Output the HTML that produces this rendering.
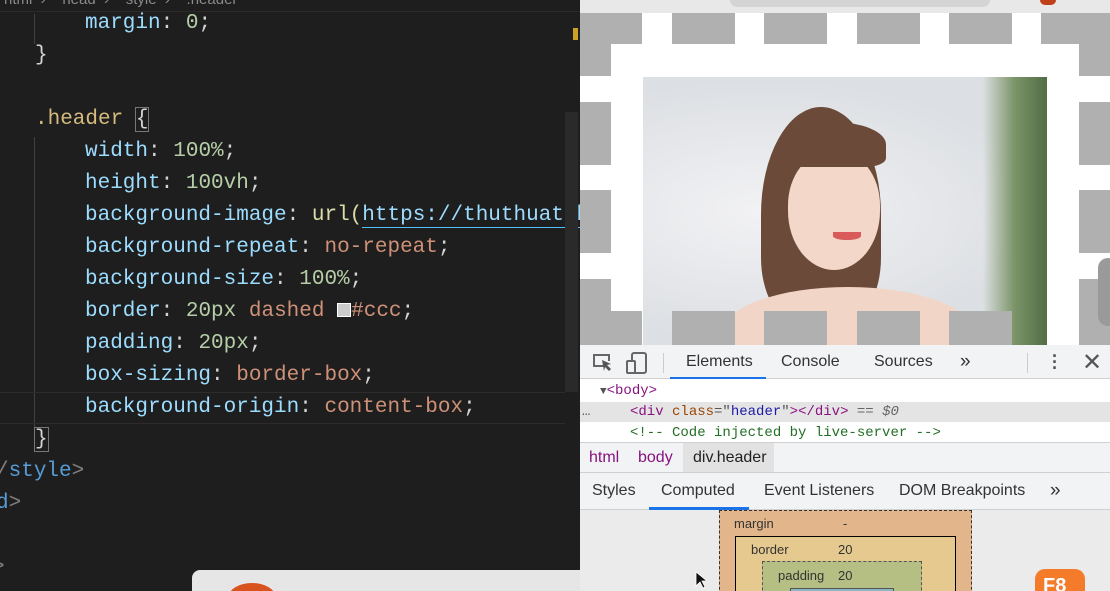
<!DOCTYPE html>
<html><head><meta charset="utf-8"><style>
*{margin:0;padding:0;box-sizing:border-box}
html,body{width:1110px;height:591px;overflow:hidden}
body{position:relative;background:#1e1e1e;font-family:"Liberation Sans",sans-serif}
.ed{position:absolute;left:0;top:0;width:580px;height:591px;background:#1e1e1e;font-family:"Liberation Mono",monospace;font-size:21px;color:#9cdcfe;overflow:hidden}
.ln{position:absolute;white-space:pre;line-height:32px;height:32px}
.p{color:#9cdcfe}.n{color:#b5cea8}.s{color:#ce9178}.w{color:#d4d4d4}.c{color:#d7ba7d}.t{color:#569cd6}.g{color:#808080}
.ab{position:absolute}
.dt{font-family:"Liberation Sans",sans-serif;font-size:16px;color:#333}
.mono{font-family:"Liberation Mono",monospace;font-size:14px}
</style></head><body>
<div class="ed">
 <div class="ab" style="left:0;top:0;width:580px;height:12px;background:#1e1e1e;border-bottom:1px solid #2a2a2a;overflow:hidden"><div style="position:absolute;top:-9px;left:4px;font-family:'Liberation Sans';font-size:15px;color:#8a8a8a;white-space:pre">html  ›    head  ›    style  ›    .header</div></div>
 <div class="ab" style="left:34px;top:14px;width:1px;height:30px;background:#404040"></div>
 <div class="ab" style="left:34px;top:137px;width:1px;height:290px;background:#404040"></div>
 <div class="ln" style="left:85px;top:8px">margin<span class="w">: </span><span class="n">0</span><span class="w">;</span></div>
 <div class="ln w" style="left:35px;top:40px">}</div>
 <div class="ln" style="left:35px;top:104px"><span class="c">.header</span> <span class="w" style="outline:1px solid #777">{</span></div>
 <div class="ln" style="left:85px;top:136px">width<span class="w">: </span><span class="n">100%</span><span class="w">;</span></div>
 <div class="ln" style="left:85px;top:168px">height<span class="w">: </span><span class="n">100vh</span><span class="w">;</span></div>
 <div class="ln" style="left:85px;top:200px">background-image<span class="w">: </span><span style="color:#dcdcaa">url(</span><span style="border-bottom:1px solid #4fc1ff">https://thuthuatnhanh.com</span></div>
 <div class="ln" style="left:85px;top:232px">background-repeat<span class="w">: </span><span class="s">no-repeat</span><span class="w">;</span></div>
 <div class="ln" style="left:85px;top:264px">background-size<span class="w">: </span><span class="n">100%</span><span class="w">;</span></div>
 <div class="ln" style="left:85px;top:296px">border<span class="w">: </span><span class="n">20px</span> <span class="s">dashed</span> <span style="display:inline-block;width:14px;height:14px;background:#ccc;border:1px solid #fff;vertical-align:-1px"></span><span class="s">#ccc</span><span class="w">;</span></div>
 <div class="ln" style="left:85px;top:328px">padding<span class="w">: </span><span class="n">20px</span><span class="w">;</span></div>
 <div class="ln" style="left:85px;top:360px">box-sizing<span class="w">: </span><span class="s">border-box</span><span class="w">;</span></div>
 <div class="ab" style="left:0;top:392px;width:565px;height:32px;border-top:1px solid #2c2c2c;border-bottom:1px solid #2c2c2c"></div>
 <div class="ln" style="left:85px;top:392px">background-origin<span class="w">: </span><span class="s">content-box</span><span class="w">;</span></div>
 <div class="ln w" style="left:35px;top:424px"><span style="outline:1px solid #777">}</span></div>
 <div class="ln" style="left:-4px;top:456px"><span class="g">/</span><span class="t">style</span><span class="g">&gt;</span></div>
 <div class="ln" style="left:-4px;top:488px"><span class="t">d</span><span class="g">&gt;</span></div>
 <div class="ln g" style="left:-8px;top:552px">&gt;</div>
 <div class="ab" style="left:565px;top:112px;width:13px;height:280px;background:#2a2a2a"></div>
 <div class="ab" style="left:573px;top:28px;width:5px;height:12px;background:#c9a227"></div>
 <div class="ab" style="left:192px;top:570px;width:400px;height:30px;background:#e6e6e6;border-radius:8px 0 0 0"></div>
 <div class="ab" style="left:228px;top:583px;width:48px;height:30px;border-radius:50%;background:#d9531e"></div>
</div>

<!-- browser preview -->
<div class="ab" style="left:580px;top:0;width:530px;height:345px;background:#fff;overflow:hidden">
 <div class="ab" style="left:0;top:0;width:530px;height:13px;background:#e8e8e8"></div>
 <div class="ab" style="left:150px;top:0;width:260px;height:7px;background:#d4d4d4;border-radius:0 0 8px 8px"></div>
 <div class="ab" style="left:460px;top:0;width:16px;height:5px;background:#c0401a;border-radius:0 0 8px 8px"></div>
 <div class="ab" style="left:0;top:13px;width:62px;height:31px;background:#b0b0b0"></div>
 <div class="ab" style="left:92px;top:13px;width:63px;height:31px;background:#b0b0b0"></div>
 <div class="ab" style="left:184px;top:13px;width:63px;height:31px;background:#b0b0b0"></div>
 <div class="ab" style="left:277px;top:13px;width:63px;height:31px;background:#b0b0b0"></div>
 <div class="ab" style="left:369px;top:13px;width:63px;height:31px;background:#b0b0b0"></div>
 <div class="ab" style="left:461px;top:13px;width:69px;height:31px;background:#b0b0b0"></div>
 <div class="ab" style="left:0;top:13px;width:31px;height:63px;background:#b0b0b0"></div>
 <div class="ab" style="left:0;top:102px;width:31px;height:63px;background:#b0b0b0"></div>
 <div class="ab" style="left:0;top:190px;width:31px;height:63px;background:#b0b0b0"></div>
 <div class="ab" style="left:0;top:279px;width:31px;height:66px;background:#b0b0b0"></div>
 <div class="ab" style="left:499px;top:13px;width:31px;height:63px;background:#b0b0b0"></div>
 <div class="ab" style="left:499px;top:102px;width:31px;height:63px;background:#b0b0b0"></div>
 <div class="ab" style="left:499px;top:190px;width:31px;height:63px;background:#b0b0b0"></div>
 <div class="ab" style="left:499px;top:279px;width:31px;height:66px;background:#b0b0b0"></div>
 <div class="ab" style="left:63px;top:77px;width:404px;height:268px;overflow:hidden;background:radial-gradient(ellipse at 30% 50%,#f2f2f4,#dcdfe3 70%)">
  <div class="ab" style="left:340px;top:0;width:70px;height:268px;background:linear-gradient(90deg,rgba(255,255,255,0),#7b9468 45%,#4a6640)"></div>
  <div class="ab" style="left:118px;top:30px;width:120px;height:215px;border-radius:50% 50% 30% 30%;background:#6b4a3a"></div>
  <div class="ab" style="left:145px;top:75px;width:92px;height:118px;border-radius:45% 45% 50% 50%;background:#f3d7c8"></div>
  <div class="ab" style="left:138px;top:45px;width:105px;height:45px;border-radius:50% 50% 20% 20%;background:#6b4a3a"></div>
  <div class="ab" style="left:80px;top:210px;width:250px;height:90px;border-radius:50% 50% 0 0;background:#f1d6c8"></div>
  <div class="ab" style="left:190px;top:155px;width:28px;height:8px;border-radius:0 0 50% 50%;background:#d95a5a"></div>
 </div>
 <div class="ab" style="left:0;top:311px;width:62px;height:34px;background:#b0b0b0"></div>
 <div class="ab" style="left:92px;top:311px;width:63px;height:34px;background:#b0b0b0"></div>
 <div class="ab" style="left:184px;top:311px;width:63px;height:34px;background:#b0b0b0"></div>
 <div class="ab" style="left:277px;top:311px;width:63px;height:34px;background:#b0b0b0"></div>
 <div class="ab" style="left:369px;top:311px;width:63px;height:34px;background:#b0b0b0"></div>
 <div class="ab" style="left:518px;top:258px;width:20px;height:68px;background:#9a9a9a;border-radius:10px"></div>
</div>

<!-- devtools -->
<div class="ab dt" style="left:580px;top:345px;width:530px;height:246px;background:#ebebeb;overflow:hidden">
 <div class="ab" style="left:0;top:0;width:530px;height:34px;background:#f1f3f4;border-bottom:1px solid #d0d0d0"></div>
 <svg class="ab" style="left:12px;top:8px" width="22" height="20" viewBox="0 0 22 20"><path d="M12 13H2V2h15v6" fill="none" stroke="#666" stroke-width="2"/><path d="M10 7l9 4-4 1 4 4-2 2-4-4-1 4z" fill="#555"/></svg>
 <svg class="ab" style="left:46px;top:7px" width="22" height="22" viewBox="0 0 22 22"><rect x="6" y="1" width="14" height="20" rx="2" fill="none" stroke="#666" stroke-width="2"/><rect x="1" y="9" width="8" height="12" rx="1" fill="#f1f3f4" stroke="#666" stroke-width="2"/></svg>
 <div class="ab" style="left:83px;top:8px;width:1px;height:20px;background:#ccc"></div>
 <div class="ab" style="left:106px;top:8px">Elements</div>
 <div class="ab" style="left:90px;top:32px;width:96px;height:2px;background:#1a73e8"></div>
 <div class="ab" style="left:201px;top:8px">Console</div>
 <div class="ab" style="left:294px;top:8px">Sources</div>
 <div class="ab" style="left:380px;top:6px;font-size:19px">»</div>
 <div class="ab" style="left:447px;top:8px;width:1px;height:20px;background:#ccc"></div>
 <div class="ab" style="left:472px;top:8px;font-size:18px;font-weight:bold;line-height:6px;color:#555">·<br>·<br>·</div>
 <div class="ab" style="left:502px;top:3px;font-size:24px;color:#555">✕</div>
 <div class="ab" style="left:0;top:34px;width:530px;height:63px;background:#fff"></div>
 <div class="ab" style="left:0;top:57px;width:530px;height:20px;background:#e4e4e4"></div>
 <div class="ab mono" style="left:20px;top:38px;color:#881280"><span style="color:#555;font-size:11px">▼</span>&lt;body&gt;</div>
 <div class="ab mono" style="left:2px;top:59px;color:#555">…</div>
 <div class="ab mono" style="left:50px;top:59px;color:#881280">&lt;div <span style="color:#994500">class</span><span style="color:#555">="</span><span style="color:#1a1aa6">header</span><span style="color:#555">"</span>&gt;&lt;/div&gt; <span style="color:#666">== <i>$0</i></span></div>
 <div class="ab mono" style="left:50px;top:80px;color:#236e25">&lt;!-- Code injected by live-server --&gt;</div>
 <div class="ab" style="left:0;top:97px;width:530px;height:31px;background:#f1f3f4;border-top:1px solid #d0d0d0;border-bottom:1px solid #d0d0d0"></div>
 <div class="ab" style="left:103px;top:98px;width:91px;height:29px;background:#e2e2e2"></div>
 <div class="ab" style="left:9px;top:104px;color:#881280">html</div>
 <div class="ab" style="left:58px;top:104px;color:#881280">body</div>
 <div class="ab" style="left:113px;top:104px;color:#222">div.header</div>
 <div class="ab" style="left:0;top:128px;width:530px;height:37px;background:#f1f3f4;border-bottom:1px solid #d0d0d0"></div>
 <div class="ab" style="left:12px;top:137px">Styles</div>
 <div class="ab" style="left:81px;top:137px">Computed</div>
 <div class="ab" style="left:69px;top:162px;width:100px;height:3px;background:#1a73e8"></div>
 <div class="ab" style="left:184px;top:137px">Event Listeners</div>
 <div class="ab" style="left:319px;top:137px">DOM Breakpoints</div>
 <div class="ab" style="left:470px;top:135px;font-size:19px">»</div>
 <div class="ab" style="left:139px;top:165px;width:253px;height:90px;background:#e2b68a;border:1px dashed #333"></div>
 <div class="ab" style="left:154px;top:171px;font-size:13px">margin</div>
 <div class="ab" style="left:263px;top:171px;font-size:13px">-</div>
 <div class="ab" style="left:155px;top:191px;width:221px;height:60px;background:#e6c98f;border:1px solid #000"></div>
 <div class="ab" style="left:171px;top:197px;font-size:13px">border</div>
 <div class="ab" style="left:258px;top:197px;font-size:13px">20</div>
 <div class="ab" style="left:182px;top:216px;width:160px;height:40px;background:#b5bf83;border:1px dashed #555"></div>
 <div class="ab" style="left:198px;top:223px;font-size:13px">padding</div>
 <div class="ab" style="left:258px;top:223px;font-size:13px">20</div>
 <div class="ab" style="left:210px;top:243px;width:104px;height:10px;background:#8cb6c0;border:1px solid #555"></div>
 <div class="ab" style="left:455px;top:224px;width:50px;height:30px;background:#f47b2a;border-radius:10px"></div>
 <div class="ab" style="left:463px;top:230px;color:#fff;font-weight:bold;font-size:20px">F8</div>
 <svg class="ab" style="left:115px;top:226px" width="12" height="18" viewBox="0 0 12 18"><path d="M1 1v14l4-4 3 6 2-1-3-6h5z" fill="#111" stroke="#fff" stroke-width=".8"/></svg>
</div>
</body></html>
